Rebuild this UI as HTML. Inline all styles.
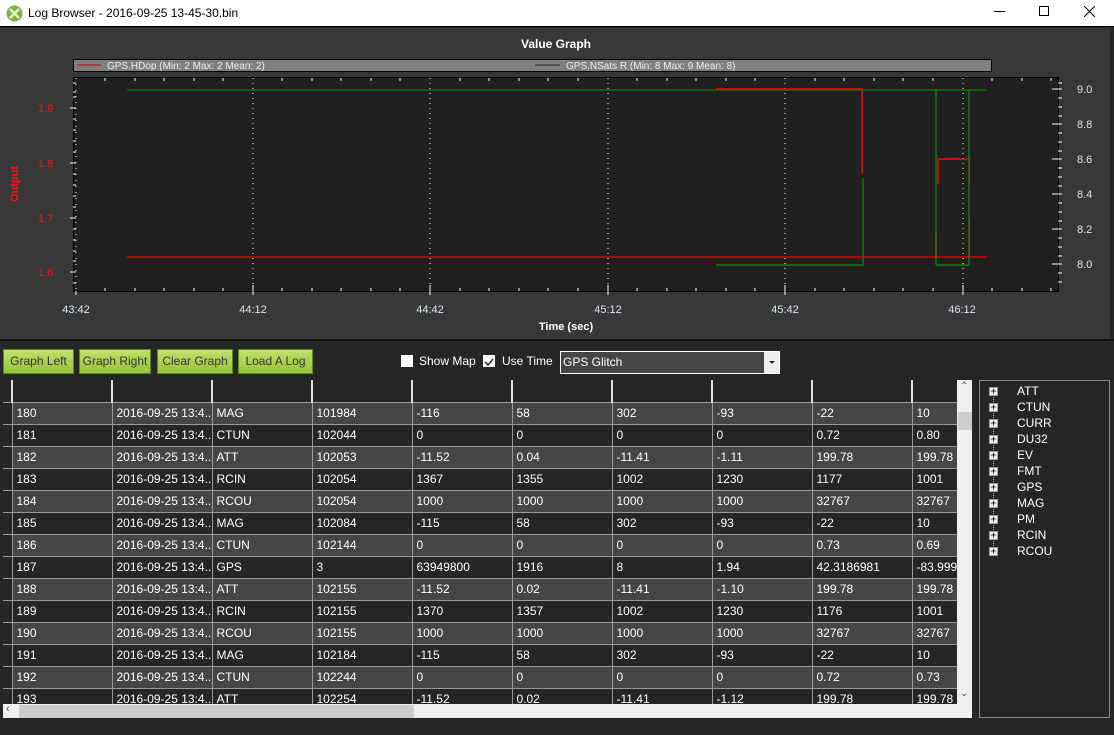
<!DOCTYPE html>
<html><head><meta charset="utf-8"><style>
*{margin:0;padding:0;box-sizing:border-box}
body{width:1114px;height:735px;overflow:hidden;background:#262626;font-family:"Liberation Sans",sans-serif;position:relative}
.abs{position:absolute}
.title{left:0;top:0;width:1114px;height:27px;background:#fff;border-bottom:1px solid #000}
.btn{position:absolute;top:349px;height:25px;border:1px solid #5f8a1a;background:linear-gradient(#c2e06a,#94c33a);color:#333;font-size:12px;text-align:center;line-height:23px}
.grid{left:3px;top:380px;width:954px;height:324px;overflow:hidden;background:#262626}
table{border-collapse:collapse;table-layout:fixed;color:#fff;font-size:12px}
td{border:1px solid #9a9a9a;height:22px;padding-left:4px;white-space:nowrap;overflow:hidden}
tr.l td{background:#464646}
td.rh{width:9px;padding:0;background:#262626!important;border-left:none}
th{height:22px;border-right:2px solid #ddd;border-bottom:1px solid #9a9a9a}
.tree{left:979px;top:380px;width:131px;height:338px;border:1px solid #8a8a8a}
.ti{position:absolute;left:37px;color:#fff;font-size:12px}
.pb{position:absolute;left:9px;width:9px;height:9px;background:#eee;border:1px solid #999;font-size:9px;line-height:7px;text-align:center;color:#225;font-weight:bold}
</style></head><body>
<div class="abs title">
<svg class="abs" style="left:6px;top:5px" width="17" height="17"><circle cx="8.5" cy="8.5" r="8" fill="#7cb342"/><path d="M4 4L13 13M13 4L4 13" stroke="#e8f5d0" stroke-width="2.5"/></svg>
<div class="abs" style="left:28px;top:6px;font-size:12px;color:#000">Log Browser - 2016-09-25 13-45-30.bin</div>
<div class="abs" style="left:994px;top:11px;width:11px;height:1px;background:#000"></div>
<div class="abs" style="left:1039px;top:6px;width:10px;height:10px;border:1px solid #000"></div>
<svg class="abs" style="left:1084px;top:6px" width="11" height="11"><path d="M0 0L11 11M11 0L0 11" stroke="#000"/></svg>
</div>
<svg class="abs" style="left:0;top:28px" width="1114" height="313" font-family="Liberation Sans" font-size="11">
<rect width="1114" height="313" fill="#383838"/>
<rect x="1110" width="4" height="313" fill="#262626"/>
<rect y="311" width="1114" height="2" fill="#111"/>
<text x="556" y="20" fill="#fff" font-weight="bold" font-size="12" text-anchor="middle">Value Graph</text>
<rect x="73.5" y="31.5" width="918" height="12" fill="#808080" stroke="#000"/>
<line x1="77" y1="37" x2="101" y2="37" stroke="#c00"/>
<text x="107" y="41" fill="#eee" font-size="10">GPS.HDop (Min: 2 Max: 2 Mean: 2)</text>
<line x1="535" y1="37" x2="560" y2="37" stroke="#222"/>
<text x="566" y="41" fill="#eee" font-size="10">GPS.NSats R (Min: 8 Max: 9 Mean: 8)</text>
<rect x="73.5" y="49.5" width="985" height="214" fill="#202020" stroke="#000"/>
<g stroke="#fff" stroke-dasharray="1,4">
<line x1="253" y1="50" x2="253" y2="263"/><line x1="430" y1="50" x2="430" y2="263"/><line x1="608" y1="50" x2="608" y2="263"/><line x1="785" y1="50" x2="785" y2="263"/><line x1="963" y1="50" x2="963" y2="263"/>
<line x1="76" y1="50" x2="76" y2="263" stroke-dasharray="1,5"/>
</g>
<g stroke="#fff">
<path d="M105 50v3M135 50v3M164 50v3M194 50v3M223 50v3M282 50v3M312 50v3M341 50v3M371 50v3M400 50v3M460 50v3M489 50v3M519 50v3M548 50v3M578 50v3M637 50v3M667 50v3M696 50v3M726 50v3M755 50v3M815 50v3M844 50v3M874 50v3M903 50v3M933 50v3M992 50v3M1022 50v3M1051 50v3"/>
<path d="M105 263v-3M135 263v-3M164 263v-3M194 263v-3M223 263v-3M282 263v-3M312 263v-3M341 263v-3M371 263v-3M400 263v-3M460 263v-3M489 263v-3M519 263v-3M548 263v-3M578 263v-3M637 263v-3M667 263v-3M696 263v-3M726 263v-3M755 263v-3M815 263v-3M844 263v-3M874 263v-3M903 263v-3M933 263v-3M992 263v-3M1022 263v-3M1051 263v-3"/>
<path d="M253 263v-6M430 263v-6M608 263v-6M785 263v-6M963 263v-6M76 263v4M253 263v4M430 263v4M608 263v4M785 263v4M963 263v4"/>
<path d="M70 80h6M70 135h6M70 190h6M70 244h6M1058 61h-6M1058 96h-6M1058 131h-6M1058 166h-6M1058 201h-6M1058 236h-6"/>
<path d="M73 55h3M73 64h3M73 69h3M73 91h3M73 102h3M73 113h3M73 124h3M73 146h3M73 157h3M73 168h3M73 179h3M73 201h3M73 212h3M73 223h3M73 233h3M73 255h3"/>
<path d="M1058 55h4M1058 70h4M1058 79h4M1058 88h4M1058 105h4M1058 114h4M1058 123h4M1058 140h4M1058 149h4M1058 158h4M1058 175h4M1058 184h4M1058 193h4M1058 210h4M1058 219h4M1058 228h4M1058 245h4M1058 254h4"/>
<path d="M1058 61h4M1058 96h4M1058 131h4M1058 166h4M1058 201h4M1058 236h4"/>
</g>
<g fill="#ff1010" font-size="11"><text x="38" y="84">1.9</text><text x="38" y="139">1.8</text><text x="38" y="194">1.7</text><text x="38" y="248">1.6</text></g>
<text transform="translate(18,156) rotate(-90)" fill="#ff1010" font-weight="bold" font-size="11" text-anchor="middle">Output</text>
<g fill="#dde6f0"><text x="1077" y="65">9.0</text><text x="1077" y="100">8.8</text><text x="1077" y="135">8.6</text><text x="1077" y="170">8.4</text><text x="1077" y="205">8.2</text><text x="1077" y="240">8.0</text></g>
<g fill="#dde6f0" text-anchor="middle"><text x="76" y="285">43:42</text><text x="253" y="285">44:12</text><text x="430" y="285">44:42</text><text x="608" y="285">45:12</text><text x="785" y="285">45:42</text><text x="962" y="285">46:12</text></g>
<text x="566" y="302" fill="#fff" font-weight="bold" text-anchor="middle">Time (sec)</text>
<g fill="none" stroke-width="1.2">
<path d="M127 229H987" stroke="#e00"/>
<path d="M716 61H862V145M936 202V229M938 156V131H969V156M969 190V229" stroke="#f00" stroke-width="1.5"/>
<path d="M127 62H987" stroke="#0a7a0a"/>
<path d="M716 237H863V150M936 62V237M936 237H969V62" stroke="#138a13"/>
</g>
</svg>
<div class="btn" style="left:3px;width:71px">Graph Left</div>
<div class="btn" style="left:79px;width:72px">Graph Right</div>
<div class="btn" style="left:157px;width:76px">Clear Graph</div>
<div class="btn" style="left:238px;width:75px">Load A Log</div>
<div class="abs" style="left:401px;top:355px;width:12px;height:12px;background:#fff"></div>
<div class="abs" style="left:419px;top:354px;color:#fff;font-size:12px">Show Map</div>
<div class="abs" style="left:483px;top:355px;width:12px;height:12px;background:#fff"><svg width="12" height="12"><path d="M2 6L5 9L10 3" stroke="#333" stroke-width="1.6" fill="none"/></svg></div>
<div class="abs" style="left:502px;top:354px;color:#fff;font-size:12px">Use Time</div>
<div class="abs" style="left:560px;top:351px;width:220px;height:23px;background:#454545;border:1px solid #fff;color:#fff;font-size:12px;padding:3px 2px">GPS Glitch</div>
<div class="abs" style="left:764px;top:352px;width:15px;height:21px;background:#efefef"><div style="margin:9px 0 0 5px;width:0;height:0;border:3px solid transparent;border-top:3px solid #222"></div></div>
<div class="abs" style="left:3px;top:380px;width:969px;height:338px;background:#f0f0f0"></div>
<div class="abs grid">
<table style="width:955px">
<colgroup><col style="width:9px"><col style="width:100px"><col style="width:100px"><col style="width:100px"><col style="width:100px"><col style="width:100px"><col style="width:100px"><col style="width:100px"><col style="width:100px"><col style="width:100px"><col style="width:46px"></colgroup>
<tr><th style="border-right:2px solid #ddd"></th><th></th><th></th><th></th><th></th><th></th><th></th><th></th><th></th><th></th><th style="border-right:none"></th></tr>
<tr class="l"><td class="rh"></td><td>180</td><td>2016-09-25 13:4...</td><td>MAG</td><td>101984</td><td>-116</td><td>58</td><td>302</td><td>-93</td><td>-22</td><td>10</td></tr>
<tr><td class="rh"></td><td>181</td><td>2016-09-25 13:4...</td><td>CTUN</td><td>102044</td><td>0</td><td>0</td><td>0</td><td>0</td><td>0.72</td><td>0.80</td></tr>
<tr class="l"><td class="rh"></td><td>182</td><td>2016-09-25 13:4...</td><td>ATT</td><td>102053</td><td>-11.52</td><td>0.04</td><td>-11.41</td><td>-1.11</td><td>199.78</td><td>199.78</td></tr>
<tr><td class="rh"></td><td>183</td><td>2016-09-25 13:4...</td><td>RCIN</td><td>102054</td><td>1367</td><td>1355</td><td>1002</td><td>1230</td><td>1177</td><td>1001</td></tr>
<tr class="l"><td class="rh"></td><td>184</td><td>2016-09-25 13:4...</td><td>RCOU</td><td>102054</td><td>1000</td><td>1000</td><td>1000</td><td>1000</td><td>32767</td><td>32767</td></tr>
<tr><td class="rh"></td><td>185</td><td>2016-09-25 13:4...</td><td>MAG</td><td>102084</td><td>-115</td><td>58</td><td>302</td><td>-93</td><td>-22</td><td>10</td></tr>
<tr class="l"><td class="rh"></td><td>186</td><td>2016-09-25 13:4...</td><td>CTUN</td><td>102144</td><td>0</td><td>0</td><td>0</td><td>0</td><td>0.73</td><td>0.69</td></tr>
<tr><td class="rh"></td><td>187</td><td>2016-09-25 13:4...</td><td>GPS</td><td>3</td><td>63949800</td><td>1916</td><td>8</td><td>1.94</td><td>42.3186981</td><td>-83.9996</td></tr>
<tr class="l"><td class="rh"></td><td>188</td><td>2016-09-25 13:4...</td><td>ATT</td><td>102155</td><td>-11.52</td><td>0.02</td><td>-11.41</td><td>-1.10</td><td>199.78</td><td>199.78</td></tr>
<tr><td class="rh"></td><td>189</td><td>2016-09-25 13:4...</td><td>RCIN</td><td>102155</td><td>1370</td><td>1357</td><td>1002</td><td>1230</td><td>1176</td><td>1001</td></tr>
<tr class="l"><td class="rh"></td><td>190</td><td>2016-09-25 13:4...</td><td>RCOU</td><td>102155</td><td>1000</td><td>1000</td><td>1000</td><td>1000</td><td>32767</td><td>32767</td></tr>
<tr><td class="rh"></td><td>191</td><td>2016-09-25 13:4...</td><td>MAG</td><td>102184</td><td>-115</td><td>58</td><td>302</td><td>-93</td><td>-22</td><td>10</td></tr>
<tr class="l"><td class="rh"></td><td>192</td><td>2016-09-25 13:4...</td><td>CTUN</td><td>102244</td><td>0</td><td>0</td><td>0</td><td>0</td><td>0.72</td><td>0.73</td></tr>
<tr><td class="rh"></td><td>193</td><td>2016-09-25 13:4...</td><td>ATT</td><td>102254</td><td>-11.52</td><td>0.02</td><td>-11.41</td><td>-1.12</td><td>199.78</td><td>199.78</td></tr>
</table></div>
<div class="abs" style="left:958px;top:412px;width:14px;height:18px;background:#cdcdcd"></div>
<div class="abs" style="left:960px;top:381px;font-size:10px;color:#555">&#8963;</div>
<div class="abs" style="left:960px;top:688px;font-size:10px;color:#555">&#8964;</div>
<div class="abs" style="left:19px;top:705px;width:395px;height:13px;background:#cdcdcd"></div>
<div class="abs" style="left:6px;top:703px;font-size:11px;color:#555">&#8249;</div>
<div class="abs tree">
<div class="abs" style="left:13px;top:10px;height:165px;border-left:1px dotted #aaa"></div>
<div class="pb" style="top:6px">+</div><div class="ti" style="top:3px">ATT</div>
<div class="pb" style="top:22px">+</div><div class="ti" style="top:19px">CTUN</div>
<div class="pb" style="top:38px">+</div><div class="ti" style="top:35px">CURR</div>
<div class="pb" style="top:54px">+</div><div class="ti" style="top:51px">DU32</div>
<div class="pb" style="top:70px">+</div><div class="ti" style="top:67px">EV</div>
<div class="pb" style="top:86px">+</div><div class="ti" style="top:83px">FMT</div>
<div class="pb" style="top:102px">+</div><div class="ti" style="top:99px">GPS</div>
<div class="pb" style="top:118px">+</div><div class="ti" style="top:115px">MAG</div>
<div class="pb" style="top:134px">+</div><div class="ti" style="top:131px">PM</div>
<div class="pb" style="top:150px">+</div><div class="ti" style="top:147px">RCIN</div>
<div class="pb" style="top:166px">+</div><div class="ti" style="top:163px">RCOU</div>
</div>
</body></html>
